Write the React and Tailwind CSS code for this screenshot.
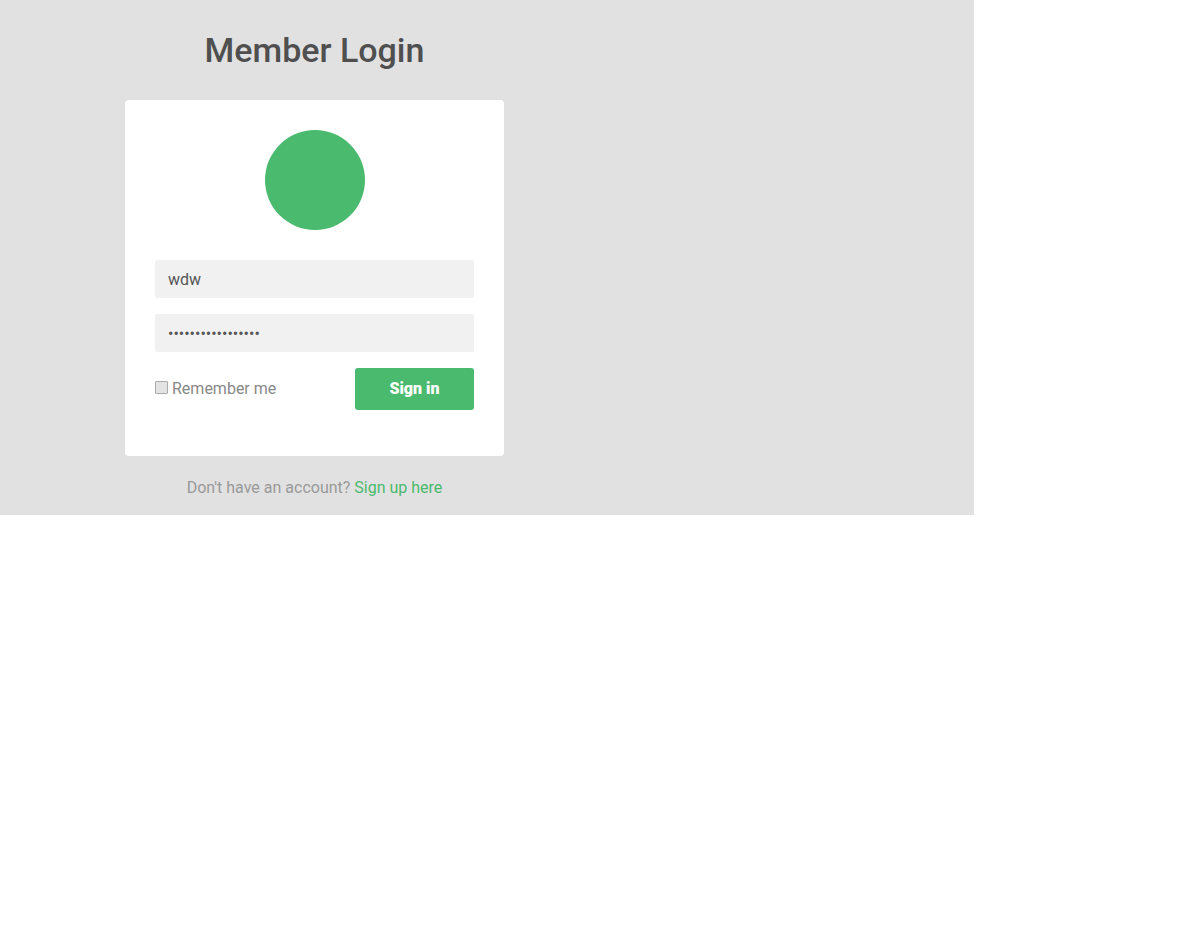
import React from 'react';

const App = () => {
    const [user, setUser] = React.useState('wdw');
    const [pass, setPass] = React.useState('qwertyuiopasdfghj');

    return (
        <div className="w-[974px] h-[515px] bg-[#e1e1e1] font-['Roboto',sans-serif]">
            <div className="ml-[125px] w-[379px] pt-[28px] flex flex-col items-center">
                {/* Judul */}
                <h1 className="text-[34px] leading-[44px] font-medium text-[#4f4f4f]">Member Login</h1>

                {/* Kartu login */}
                <div className="mt-[28px] w-full bg-white rounded-[4px] px-[30px] pt-[30px] pb-[46px] flex flex-col">
                    <div className="mx-auto w-[100px] h-[100px] rounded-full bg-[#4aba6e]"></div>

                    <input
                        value={user}
                        onChange={(e) => setUser(e.target.value)}
                        className="mt-[30px] h-[38px] w-full bg-[#f1f1f1] rounded-[2px] px-[13px] text-[16px] text-[#555] outline-none"
                    />
                    <input
                        type="password"
                        value={pass}
                        onChange={(e) => setPass(e.target.value)}
                        className="mt-[16px] h-[38px] w-full bg-[#f1f1f1] rounded-[2px] px-[13px] text-[16px] text-[#555] outline-none"
                    />

                    <div className="mt-[16px] flex items-center justify-between">
                        <label className="flex items-center text-[16px] text-[#888]">
                            <span className="w-[13px] h-[13px] mb-[3px] border border-[#aaa] bg-[#e3e3e3] rounded-[1px] mr-[4px]"></span>
                            Remember me
                        </label>
                        <button className="w-[119px] h-[42px] bg-[#4aba6e] rounded-[3px] text-white text-[16px] font-black">
                            Sign in
                        </button>
                    </div>
                </div>

                <p className="mt-[20px] text-[16px] text-[#999]">
                    Don't have an account? <a href="#" className="text-[#4aba6e]">Sign up here</a>
                </p>
            </div>
        </div>
    );
};

export default App;
